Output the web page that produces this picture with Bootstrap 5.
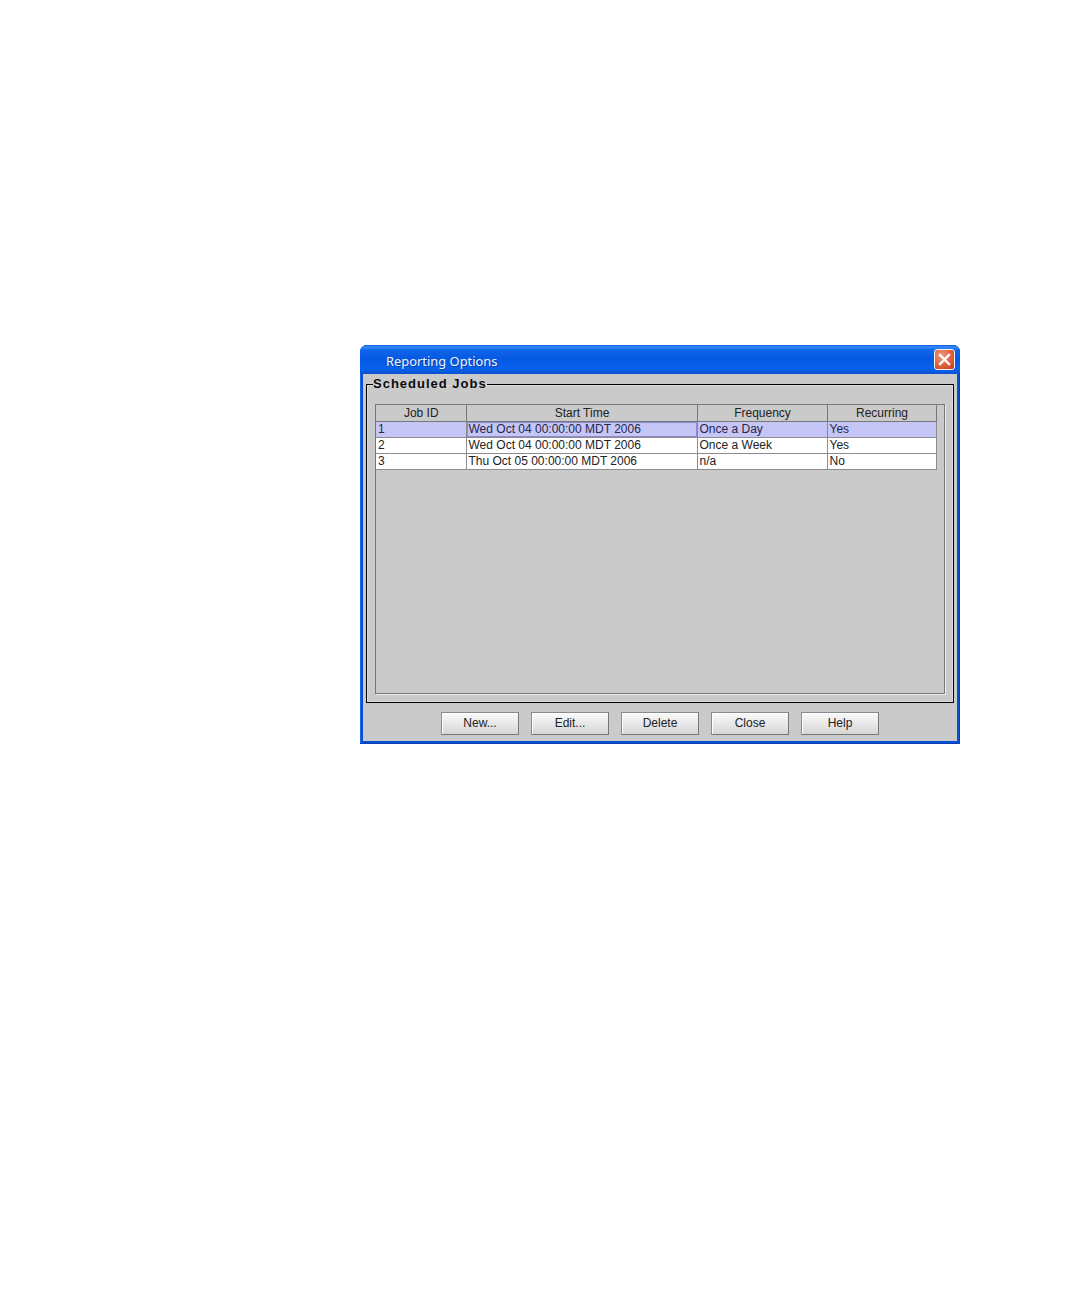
<!DOCTYPE html>
<html lang="en">
<head>
<meta charset="utf-8">
<title>Reporting Options</title>
<link href="https://cdn.jsdelivr.net/npm/bootstrap@5.3.0/dist/css/bootstrap.min.css" rel="stylesheet">
<style>
html,body{background:#fff;height:1296px;overflow:hidden}
body{padding:345px 120px 0 360px;font-family:"Liberation Sans",Arial,sans-serif;font-size:12px;color:#111}
.xp-window{width:600px;height:399px;background:#0a4fd0;border-radius:7px 7px 0 0;padding:0 3px 3px 3px;box-shadow:inset 0 -1px 0 #0a3fb8,inset 1px 0 0 #1f66e6,inset -1px 0 0 #0a3fb8}
.xp-title{height:29px;margin:0 -3px;padding:0 5px 0 26px;border-radius:7px 7px 0 0;background:linear-gradient(#0a5ce6 0,#3a8cf5 2px,#0f65ea 5px,#0558e2 14px,#0a62ec 24px,#0a50d0 29px)}
.xp-title-text{color:#eef4ff;font-family:"Noto Sans","Open Sans",sans-serif;font-size:12.9px;line-height:1;padding-top:3px;text-shadow:1px 1px 0 #0a3fb0}
.xp-close{width:21px;height:21px;border:1px solid #f2f2f2;border-radius:3px;background:radial-gradient(circle at 35% 30%,#ee9a80,#dc5c36 60%,#c03c1c);padding:0}
.xp-body{height:367px;background:#cacaca;padding:2px 3px 0 3px}
.xp-group{height:327px;margin:0;padding:0 8px 8px 8px;border:1px solid #000;min-width:0;box-shadow:inset 0 0 0 1px #ddd}
.xp-group legend{float:none;width:auto;margin:0 0 0 -2px;padding:0;font-family:"Liberation Sans",Arial,sans-serif;font-size:13px;line-height:16px;font-weight:700;letter-spacing:1px;color:#0a0a0a;height:17px}
.xp-scroll{height:290px;margin-top:11px;border:1px solid #777;box-shadow:1px 1px 0 #eee;background:#cacaca}
.xp-table{width:560px;table-layout:fixed;border-collapse:collapse;margin:0;font-size:12px;color:#222}
.xp-table th,.xp-table td{height:16px;padding:0 1px 0 2px;line-height:15px;font-weight:400;border:1px solid #8d8d8d;white-space:nowrap;overflow:hidden}
.xp-table tr:first-child th{border-top:0}
.xp-table th:first-child,.xp-table td:first-child{border-left:0}
.xp-table th{background:#cacaca;text-align:center;padding-top:1px;border-color:#777}
.xp-table td{background:#fff}
.xp-table tr.xp-sel td{background:#c6c6f6;color:#26264a}
.xp-table td.xp-focus{box-shadow:inset 0 0 0 1px #8a8ad0}
.xp-actions{height:36px;gap:12px;padding-top:4px}
.xp-btn{width:78px;height:23px;padding:0;font-size:12px;color:#222;border:1px solid #8a8a8a;border-right-color:#777;border-bottom-color:#777;border-radius:0;background:linear-gradient(#fafafa,#d6d6d6);box-shadow:inset 1px 1px 0 #fff;font-family:"Liberation Sans",Arial,sans-serif;line-height:21px}
</style>
</head>
<body>
<div class="xp-window">
  <div class="xp-title d-flex align-items-center justify-content-between">
    <span class="xp-title-text">Reporting Options</span>
    <button type="button" class="xp-close d-flex align-items-center justify-content-center" aria-label="Close">
      <svg width="13" height="13" viewBox="0 0 13 13"><path d="M2 2 L11 11 M11 2 L2 11" stroke="#fff" stroke-width="2.4" stroke-linecap="square"/></svg>
    </button>
  </div>
  <div class="xp-body">
    <fieldset class="xp-group">
      <legend>Scheduled Jobs</legend>
      <div class="xp-scroll">
        <table class="xp-table">
          <colgroup><col style="width:90px"><col style="width:231px"><col style="width:130px"><col style="width:109px"></colgroup>
          <tr><th>Job ID</th><th>Start Time</th><th>Frequency</th><th>Recurring</th></tr>
          <tr class="xp-sel"><td>1</td><td class="xp-focus">Wed Oct 04 00:00:00 MDT 2006</td><td>Once a Day</td><td>Yes</td></tr>
          <tr><td>2</td><td>Wed Oct 04 00:00:00 MDT 2006</td><td>Once a Week</td><td>Yes</td></tr>
          <tr><td>3</td><td>Thu Oct 05 00:00:00 MDT 2006</td><td>n/a</td><td>No</td></tr>
        </table>
      </div>
    </fieldset>
    <div class="xp-actions d-flex justify-content-center align-items-center">
      <button type="button" class="btn xp-btn">New...</button>
      <button type="button" class="btn xp-btn">Edit...</button>
      <button type="button" class="btn xp-btn">Delete</button>
      <button type="button" class="btn xp-btn">Close</button>
      <button type="button" class="btn xp-btn">Help</button>
    </div>
  </div>
</div>
<script src="https://cdn.jsdelivr.net/npm/bootstrap@5.3.0/dist/js/bootstrap.bundle.min.js"></script>
</body>
</html>
